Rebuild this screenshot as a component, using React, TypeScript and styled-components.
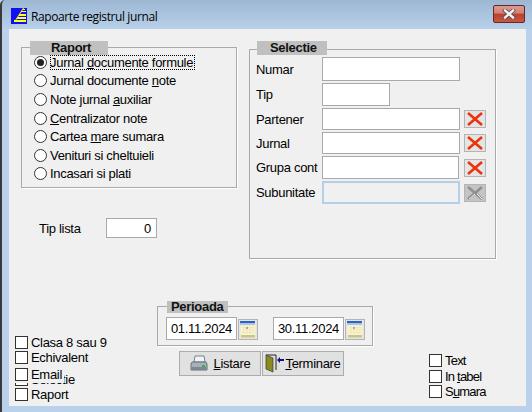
import React from 'react';
import styled, { createGlobalStyle } from 'styled-components';

const GlobalStyle = createGlobalStyle`
  html, body {
    margin: 0;
    padding: 0;
    background: #b9d1ea;
  }
  body {
    font-family: "Liberation Sans", Arial, sans-serif;
    font-size: 13px;
    letter-spacing: -0.3px;
    color: #000;
  }
`;

const Frame = styled.div`
  width: 532px;
  height: 412px;
  box-sizing: border-box;
  display: flex;
  flex-direction: column;
  padding: 0 6px 6px 7px;
  border-left: 2px solid #3a3a3a;
  border-top-left-radius: 5px;
  background: linear-gradient(#9db7d3 0, #b9d1ea 30px);
  overflow: hidden;
`;
const TitleBar = styled.div`
  height: 29px;
  flex: none;
  display: flex;
  align-items: center;
  margin-left: 2px;
  padding-top: 3px;
  box-sizing: border-box;
`;
const TitleText = styled.div`
  font-family: "Open Sans", "Liberation Sans", sans-serif;
  font-size: 12px;
  margin-left: 4px;
  letter-spacing: -0.4px;
`;
const CloseButton = styled.div`
  margin-left: auto;
  width: 32px;
  height: 18px;
  margin-right: 1px;
  margin-top: -4px;
  box-sizing: border-box;
  border: 1px solid #5e2a2f;
  border-radius: 2px;
  display: flex;
  align-items: center;
  justify-content: center;
  background: linear-gradient(#dd9a8e 0, #d47f72 45%, #b9402f 50%, #c9583f 100%);
`;
const Client = styled.div`
  flex: 1;
  background: #f0f0f0;
  display: flex;
  flex-direction: column;
`;
const TopArea = styled.div`
  height: 272px;
  flex: none;
  display: flex;
  padding: 18px 0 0 12px;
  box-sizing: border-box;
  gap: 12px;
`;
const LeftColumn = styled.div`
  width: 216px;
  display: flex;
  flex-direction: column;
`;
const Group = styled.div<{ $w: number; $h: number; $mt?: number }>`
  width: ${(p) => p.$w}px;
  height: ${(p) => p.$h}px;
  margin-top: ${(p) => p.$mt ?? 0}px;
  box-sizing: border-box;
  border: 1px solid #a9a9a9;
  box-shadow: 1px 1px 0 #fff;
  display: flex;
  flex-direction: column;
`;
const Legend = styled.div<{ $w: number; $h?: number; $mt: number; $ml: number; $pl: number }>`
  width: ${(p) => p.$w}px;
  height: ${(p) => p.$h ?? 14}px;
  margin-top: ${(p) => p.$mt}px;
  margin-left: ${(p) => p.$ml}px;
  padding-left: ${(p) => p.$pl}px;
  box-sizing: border-box;
  flex: none;
  background: #c0c0c0;
  font-weight: bold;
  line-height: ${(p) => p.$h ?? 14}px;
  color: #111;
`;
const RadioList = styled.div`
  margin-top: -2px;
  padding-left: 12px;
  display: flex;
  flex-direction: column;
`;
const RadioRow = styled.div`
  height: 18.6px;
  display: flex;
  align-items: center;
  gap: 3px;
`;
const RadioMark = styled.span<{ $on?: boolean }>`
  width: 13px;
  height: 13px;
  box-sizing: border-box;
  border: 1px solid #333;
  border-radius: 50%;
  background: #fff;
  display: flex;
  align-items: center;
  justify-content: center;
  &::after {
    content: '';
    width: 7px;
    height: 7px;
    border-radius: 50%;
    background: ${(p) => (p.$on ? '#222' : 'transparent')};
  }
`;
const RadioLabel = styled.span<{ $focus?: boolean }>`
  line-height: 15px;
  outline: ${(p) => (p.$focus ? '1px dotted #000' : 'none')};
  outline-offset: -1px;
  padding: 0 2px 0 0;
`;
const TipLista = styled.div`
  margin: 30px 0 0 18px;
  height: 20px;
  display: flex;
  align-items: center;
`;
const TipLabel = styled.div`
  width: 67px;
`;
const Field = styled.div<{ $w: number; $h: number; $disabled?: boolean; $right?: boolean }>`
  width: ${(p) => p.$w}px;
  height: ${(p) => p.$h}px;
  flex: none;
  box-sizing: border-box;
  background: ${(p) => (p.$disabled ? '#f0f0f0' : '#fff')};
  border: ${(p) => (p.$disabled ? '2px solid #b5cfe8' : '1px solid #a9a9a9')};
  display: flex;
  align-items: center;
  justify-content: ${(p) => (p.$right ? 'flex-end' : 'flex-start')};
  padding: 0 5px;
`;
const SelectieRows = styled.div`
  margin-top: 2px;
  padding-left: 6px;
  display: flex;
  flex-direction: column;
  gap: 2px;
`;
const SelectieRow = styled.div<{ $h: number }>`
  height: ${(p) => p.$h}px;
  display: flex;
  align-items: center;
`;
const SelectieLabel = styled.div`
  width: 66px;
  flex: none;
  white-space: nowrap;
`;
const ClearButton = styled.div<{ $disabled?: boolean; $ml?: number }>`
  width: 22px;
  height: 18px;
  margin-left: ${(p) => p.$ml ?? 4}px;
  box-sizing: border-box;
  border: 1px solid #b4b4b4;
  background: ${(p) => (p.$disabled ? '#c4c4c4' : '#e4e4e4')};
  display: flex;
  align-items: center;
  justify-content: center;
`;
const BottomArea = styled.div`
  flex: 1;
  display: flex;
`;
const LeftChecks = styled.div`
  width: 148px;
  padding-left: 6px;
  box-sizing: border-box;
  flex: none;
  display: flex;
  flex-direction: column;
  margin-top: 33px;
`;
const CheckRow = styled.div<{ $mt?: number; $h?: number; $pr?: number }>`
  position: relative;
  width: fit-content;
  height: ${(p) => p.$h ?? 16}px;
  margin-top: ${(p) => p.$mt ?? 0}px;
  display: flex;
  align-items: flex-start;
  gap: 3px;
  background: #f0f0f0;
  line-height: 13px;
  padding: 2px ${(p) => p.$pr ?? 0}px 0 0;
  box-sizing: border-box;
`;
const CheckBox = styled.span`
  width: 13px;
  height: 13px;
  flex: none;
  box-sizing: border-box;
  border: 1px solid #333;
  background: #fff;
`;
const CenterColumn = styled.div`
  width: 216px;
  flex: none;
  display: flex;
  flex-direction: column;
`;
const DateRow = styled.div`
  display: flex;
  align-items: flex-start;
  margin: 4px 0 0 8px;
`;
const DateField = styled(Field)`
  justify-content: center;
  padding: 0;
  letter-spacing: -0.3px;
`;
const CalendarButton = styled.div<{ $mr?: number }>`
  width: 20px;
  height: 21px;
  margin: 2px ${(p) => p.$mr ?? 0}px 0 1px;
  box-sizing: border-box;
  border: 1px solid #b4b4b4;
  background: #e4e4e4;
  display: flex;
  align-items: center;
  justify-content: center;
`;
const ButtonRow = styled.div`
  display: flex;
  gap: 1px;
  margin: 5px 0 0 22px;
`;
const ActionButton = styled.div<{ $gap: number }>`
  width: 82px;
  height: 25px;
  box-sizing: border-box;
  border: 1px solid #acacac;
  background: #e1e1e1;
  display: flex;
  align-items: center;
  justify-content: center;
  gap: ${(p) => p.$gap}px;
`;
const RightChecks = styled.div`
  margin: 52px 0 0 56px;
  display: flex;
  flex-direction: column;
`;
const NarrowRow = styled(CheckRow)`
  height: 15.5px;
  padding-top: 1px;
  letter-spacing: -0.8px;
`;

const LogoIcon = () => (
  <svg width="16" height="16" viewBox="0 0 16 16">
    <rect width="16" height="16" fill="#1010f0" />
    <path d="M12 1h2v1h-2zM10 3h5v1H10zM8 6h7v2H8zM6 9h9v2H6zM3 12h12v2H3z" fill="#ffff20" />
    <path d="M12 0L3 14h1L13 0z" fill="#ffff20" />
  </svg>
);

const CloseGlyph = () => (
  <svg width="14" height="10" viewBox="0 0 14 10">
    <path d="M3 1.5L11 8.5M11 1.5L3 8.5" stroke="#4c4c5c" strokeWidth="4" strokeLinecap="square" />
    <path d="M3 1.5L11 8.5M11 1.5L3 8.5" stroke="#f4f4f4" strokeWidth="2.4" strokeLinecap="square" />
  </svg>
);

const RedX = ({ disabled }: { disabled?: boolean }) => (
  <svg width="16" height="14" viewBox="0 0 16 14">
    <path
      d="M1 1L15 13M15 1L1 13"
      stroke={disabled ? '#8f8f8f' : '#ea340b'}
      strokeWidth="2.6"
      fill="none"
    />
    {disabled && <path d="M2 13L8 8M10 8L15 13" stroke="#eee" strokeWidth="1" fill="none" />}
  </svg>
);

const CalendarIcon = () => (
  <svg width="16" height="17" viewBox="0 0 16 17">
    <rect x="0.5" y="0.5" width="15" height="16" fill="#f8f4cc" />
    <rect x="0" y="0" width="15" height="2" fill="#2a63c4" />
    <rect x="0" y="2" width="15" height="2" fill="#a9c4e8" />
    <path d="M2 6.5h12M2 9h12M2 11.5h12M4 4v9M7 4v9M10 4v9M13 4v9" stroke="#e8e3b4" strokeWidth="0.6" />
    <rect x="6" y="6" width="2" height="2" fill="#d092b8" />
    <path d="M1 14h14v2.5H1z" fill="#c9c48a" />
  </svg>
);

const PrinterIcon = () => (
  <svg width="18" height="17" viewBox="0 0 18 17">
    <path d="M5 1h9l1 6H4z" fill="#f2f4f6" stroke="#77818c" />
    <path d="M2 7h14l1 2v6H1V9z" fill="#a6b0ba" stroke="#66707a" />
    <path d="M2 12h14v3H2z" fill="#7d8790" />
    <rect x="12" y="10" width="3" height="2" fill="#22c02a" />
  </svg>
);

const DoorIcon = () => (
  <svg width="19" height="19" viewBox="0 0 19 19">
    <path d="M1 1h10v15" fill="none" stroke="#222" />
    <path d="M1 1l7 3v14l-7-3z" fill="#8a8a20" stroke="#333" strokeWidth="0.7" />
    <path d="M12 6l3-3v2h4v2h-4v2z" fill="#10107a" />
  </svg>
);

const radios: React.ReactNode[] = [
  <>Jurnal <u>d</u>ocumente formule</>,
  <>Jurnal documente <u>n</u>ote</>,
  <>Note jurnal <u>a</u>uxiliar</>,
  <><u>C</u>entralizator note</>,
  <>Cartea <u>m</u>are sumara</>,
  <>Venituri si cheltuieli</>,
  <>Incasari si plati</>,
];

const App: React.FC = () => {
  return (
    <>
      <GlobalStyle />
      <Frame>
        <TitleBar>
          <LogoIcon />
          <TitleText>Rapoarte registrul jurnal</TitleText>
          <CloseButton>
            <CloseGlyph />
          </CloseButton>
        </TitleBar>
        <Client>
          <TopArea>
            <LeftColumn>
              <Group $w={216} $h={141}>
                <Legend $w={78} $mt={-7} $ml={8} $pl={21}>Raport</Legend>
                <RadioList>
                  {radios.map((label, i) => (
                    <RadioRow key={i}>
                      <RadioMark $on={i === 0} />
                      <RadioLabel $focus={i === 0}>{label}</RadioLabel>
                    </RadioRow>
                  ))}
                </RadioList>
              </Group>
              <TipLista>
                <TipLabel>Tip lista</TipLabel>
                <Field $w={51} $h={20} $right>0</Field>
              </TipLista>
            </LeftColumn>
            <Group $w={247} $h={210} $mt={2}>
              <Legend $w={70} $mt={-9} $ml={7} $pl={13}>Selectie</Legend>
              <SelectieRows>
                <SelectieRow $h={24}>
                  <SelectieLabel>Numar</SelectieLabel>
                  <Field $w={138} $h={24} />
                </SelectieRow>
                <SelectieRow $h={23}>
                  <SelectieLabel>Tip</SelectieLabel>
                  <Field $w={68} $h={23} />
                </SelectieRow>
                <SelectieRow $h={22}>
                  <SelectieLabel>Partener</SelectieLabel>
                  <Field $w={138} $h={22} />
                  <ClearButton><RedX /></ClearButton>
                </SelectieRow>
                <SelectieRow $h={22}>
                  <SelectieLabel>Jurnal</SelectieLabel>
                  <Field $w={138} $h={22} />
                  <ClearButton><RedX /></ClearButton>
                </SelectieRow>
                <SelectieRow $h={23}>
                  <SelectieLabel>Grupa cont</SelectieLabel>
                  <Field $w={137} $h={23} />
                  <ClearButton $ml={5}><RedX /></ClearButton>
                </SelectieRow>
                <SelectieRow $h={23}>
                  <SelectieLabel>Subunitate</SelectieLabel>
                  <Field $w={138} $h={23} $disabled />
                  <ClearButton $disabled><RedX disabled /></ClearButton>
                </SelectieRow>
              </SelectieRows>
            </Group>
          </TopArea>
          <BottomArea>
            <LeftChecks>
              <CheckRow><CheckBox /><span>Clasa 8 sau 9</span></CheckRow>
              <CheckRow $mt={-1}><CheckBox /><span>Echivalent</span></CheckRow>
              <CheckRow $mt={6} $h={16}><CheckBox /><span>Selectie</span></CheckRow>
              <CheckRow $mt={-21} $h={17} $pr={2}><CheckBox /><span>Email</span></CheckRow>
              <CheckRow $mt={3}><CheckBox /><span>Raport</span></CheckRow>
            </LeftChecks>
            <CenterColumn>
              <Group $w={216} $h={40} $mt={5}>
                <Legend $w={61} $h={12} $mt={-6} $ml={9} $pl={4}>Perioada</Legend>
                <DateRow>
                  <DateField $w={71} $h={23}>01.11.2024</DateField>
                  <CalendarButton $mr={15}><CalendarIcon /></CalendarButton>
                  <DateField $w={71} $h={23}>30.11.2024</DateField>
                  <CalendarButton><CalendarIcon /></CalendarButton>
                </DateRow>
              </Group>
              <ButtonRow>
                <ActionButton $gap={6}>
                  <PrinterIcon />
                  <span><u>L</u>istare</span>
                </ActionButton>
                <ActionButton $gap={1}>
                  <DoorIcon />
                  <span><u>T</u>erminare</span>
                </ActionButton>
              </ButtonRow>
            </CenterColumn>
            <RightChecks>
              <NarrowRow><CheckBox /><span>Text</span></NarrowRow>
              <NarrowRow><CheckBox /><span>In <u>t</u>abel</span></NarrowRow>
              <NarrowRow><CheckBox /><span>S<u>u</u>mara</span></NarrowRow>
            </RightChecks>
          </BottomArea>
        </Client>
      </Frame>
    </>
  );
};

export default App;
